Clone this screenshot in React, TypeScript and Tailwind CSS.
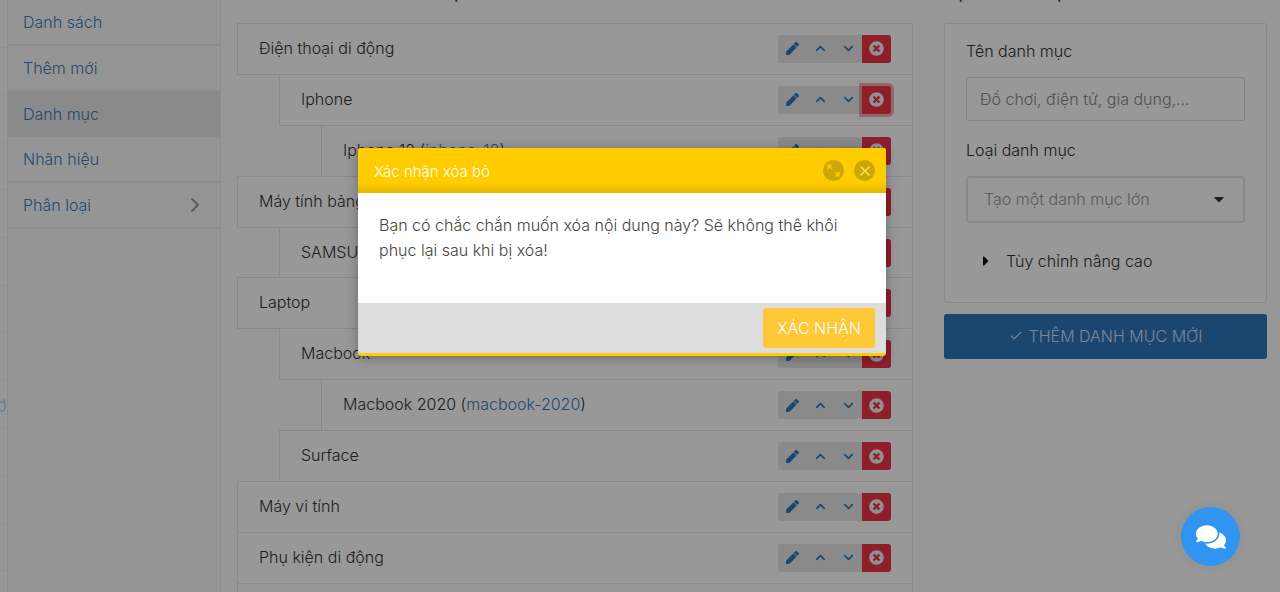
import { FaPen, FaTimesCircle, FaComments, FaCaretDown, FaCaretRight } from "react-icons/fa";
import { LuChevronUp, LuChevronDown, LuChevronRight, LuX, LuCheck } from "react-icons/lu";

const menu = ["Danh sách", "Thêm mới", "Danh mục", "Nhãn hiệu", "Phân loại"];
const rail = Array.from({ length: 12 }, (_, i) => i);
const rows: { name: string; slug?: string; level: string }[] = [
  { name: "Điện thoại di động", level: "ml-0" },
  { name: "Iphone", level: "ml-[42px]" },
  { name: "Iphone 12", slug: "iphone-12", level: "ml-[84px]" },
  { name: "Máy tính bảng", level: "ml-0" },
  { name: "SAMSUNG", level: "ml-[42px]" },
  { name: "Laptop", level: "ml-0" },
  { name: "Macbook", level: "ml-[42px]" },
  { name: "Macbook 2020", slug: "macbook-2020", level: "ml-[84px]" },
  { name: "Surface", level: "ml-[42px]" },
  { name: "Máy vi tính", level: "ml-0" },
  { name: "Phụ kiện di động", level: "ml-0" },
  { name: "Thời trang", level: "ml-0" },
];

function Actions({ focus }: { focus?: boolean }) {
  return (
    <div className="flex h-7 items-stretch">
      <div className="flex w-[84px] items-center rounded-l-[3px] bg-[#e6e6e6] text-[#2d75bb]">
        <span className="flex w-7 justify-center"><FaPen className="text-[13px]" /></span>
        <span className="flex w-7 justify-center"><LuChevronUp className="text-[15px]" strokeWidth={2.5} /></span>
        <span className="flex w-7 justify-center"><LuChevronDown className="text-[15px]" strokeWidth={2.5} /></span>
      </div>
      <div className={`flex w-[29px] items-center justify-center rounded-r-[3px] bg-[#ee3349] ${focus ? "shadow-[0_0_0_3px_rgba(238,51,73,0.4)]" : ""}`}>
        <FaTimesCircle className="text-[15px] text-[#f2f2f2]" />
      </div>
    </div>
  );
}

export default function App() {
  return (
    <div className="relative h-[592px] w-[1280px] overflow-hidden bg-[#fcfcfc] font-['Inter',sans-serif] text-[16px] font-light text-[#333]">
      <div className="flex h-full">
        <div className="relative w-[7px] shrink-0 overflow-hidden">
          {rail.map((i) => (
            <div key={i} className="h-[47.6px] border-b border-[#f0f0f0]" />
          ))}
          <svg className="absolute left-0 top-[398px]" width="7" height="14" viewBox="0 0 7 14" fill="none" stroke="#9cc0e0" strokeWidth="1">
            <path d="M-3 4h6a2 2 0 0 1 2 2v4a3 3 0 0 1-3 3h-5M3 1.500a1.200 1.200 0 1 1 0 2.400" />
          </svg>
        </div>
        <aside className="h-full w-[214px] shrink-0 border-x border-[#e8e8e8] bg-[#f9f9f9]">
          {menu.map((m, i) => (
            <div key={m} className={`flex h-[45.7px] items-center justify-between border-b-2 border-[#ececec] pl-[15px] pr-[13px] text-[#3a7bb8] ${i === 2 ? "bg-[#e6e6e6]" : ""} ${i === 0 ? "h-[46px]" : ""}`}>
              <span>{m}</span>
              {m === "Phân loại" && <LuChevronRight className="text-[24px] text-[#999]" />}
            </div>
          ))}
        </aside>
        <main className="w-[692px] shrink-0 pl-4">
          <h2 className="-mt-[21px] h-[44px] text-[20px] leading-[24px]">Danh sách các danh mục</h2>
          {rows.map((r) => (
            <div key={r.name} className={`-mb-px flex h-[51.9px] items-center justify-between border border-[#e4e4e4] bg-[#fdfdfd] pl-[21px] pr-[21px] ${r.level}`}>
              <span className="pb-[2px]">
                {r.name}
                {r.slug && <> (<span className="text-[#3a7bb8]">{r.slug}</span>)</>}
              </span>
              <Actions focus={r.name === "Iphone"} />
            </div>
          ))}
        </main>
        <section className="ml-[31px] w-[323px] shrink-0">
          <h2 className="-mt-[21px] h-[44px] text-[20px] leading-[24px]">Tạo danh mục</h2>
          <div className="h-[280px] rounded-[3px] border border-[#e4e4e4] bg-[#fdfdfd] px-[21px] pt-[15px]">
            <div className="leading-[24px]">Tên danh mục</div>
            <div className="mt-[14px] flex h-[44px] items-center rounded-[3px] border border-[#ddd] px-[13px] text-[#888]">Đồ chơi, điện tử, gia dụng,...</div>
            <div className="mt-[17px] leading-[24px]">Loại danh mục</div>
            <div className="mt-[14px] flex h-[47px] items-center justify-between rounded-[4px] border-2 border-[#e4e4e4] pb-[2px] pl-[16px] pr-[16px] text-[#999]">
              <span>Tạo một danh mục lớn</span>
              <FaCaretDown className="text-[16px] text-[#333]" />
            </div>
            <div className="ml-[12px] mt-[26px] flex items-center gap-[12px]">
              <FaCaretRight className="text-[16px] text-[#111]" />
              <span>Tùy chỉnh nâng cao</span>
            </div>
          </div>
          <div className="mt-[11px] flex h-[45px] items-center justify-center gap-[6px] rounded-[3px] bg-[#2d75bb] pb-[2px] text-[#cfe0f0]">
            <LuCheck className="text-[14px]" />
            <span>THÊM DANH MỤC MỚI</span>
          </div>
        </section>
      </div>

      <div className="absolute inset-0 bg-black/40" />

      <div className="absolute left-[358px] top-[148px] w-[528px] rounded-[3px] border-b-[3px] border-[#ffcc00] bg-white shadow-[0_2px_12px_rgba(0,0,0,0.3)]">
        <div className="flex h-[45px] items-center justify-between rounded-t-[3px] bg-[linear-gradient(to_bottom,#ffcc00_0,#ffcc00_78%,#e3b600_100%)] pl-4 pr-[11px] text-[15px] text-white">
          <span className="pt-[3px]">Xác nhận xóa bỏ</span>
          <div className="flex gap-[10px]">
            <span className="flex h-[21px] w-[21px] items-center justify-center rounded-full bg-[#cda609]">
              <svg width="13" height="13" viewBox="0 0 13 13" fill="#ffcc00" stroke="#ffcc00" strokeWidth="1.2">
                <path d="M1 1h3.500L1 4.500z" />
                <path d="M12 12H8.500L12 8.500z" />
                <path d="M3 3l2 2M10 10L8 8" fill="none" />
              </svg>
            </span>
            <span className="flex h-[21px] w-[21px] items-center justify-center rounded-full bg-[#cda609] text-[#ffdb4d]"><LuX className="text-[16px]" strokeWidth={2.5} /></span>
          </div>
        </div>
        <div className="h-[110px] pl-[21px] pr-[40px] pt-[20px] text-[16px] leading-[25px] text-[#444]">
          Bạn có chắc chắn muốn xóa nội dung này? Sẽ không thê khôi phục lại sau khi bị xóa!
        </div>
        <div className="flex h-[50px] items-start justify-end bg-[#dddddd] pr-[11px] pt-[5px]">
          <div className="flex h-10 w-[112px] items-center justify-center rounded-[3px] bg-[#fec836] text-white">XÁC NHẬN</div>
        </div>
      </div>

      <div className="absolute left-[1181px] top-[507px] flex h-[59px] w-[59px] items-center justify-center rounded-full bg-[#3094f0] text-white shadow-[0_0_12px_rgba(0,0,0,0.06)]">
        <FaComments className="text-[30px]" />
      </div>
    </div>
  );
}
